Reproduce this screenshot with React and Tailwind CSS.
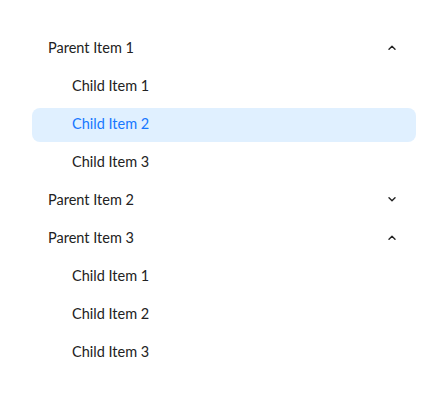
import React from "react";

function Chevron({ up }) {
  return (
    <svg width="8" height="5" viewBox="0 0 8 5" className="shrink-0">
      <path
        d={up ? "M1 4.2 L4 1.2 L7 4.2" : "M1 0.8 L4 3.8 L7 0.8"}
        fill="none"
        stroke="#222"
        strokeWidth="1.4"
        strokeLinecap="round"
        strokeLinejoin="round"
      />
    </svg>
  );
}

function Parent({ label, open }) {
  return (
    <div className="h-[34px] flex items-center justify-between pl-4 pr-[20px] pb-[3px] rounded-lg">
      <span>{label}</span>
      <Chevron up={open} />
    </div>
  );
}

function Child({ label, active }) {
  return (
    <div
      className={
        active
          ? "h-[34px] flex items-center pl-10 pb-[3px] rounded-lg bg-[#e0f0ff] text-[#1677ff]"
          : "h-[34px] flex items-center pl-10 pb-[3px] rounded-lg"
      }
    >
      {label}
    </div>
  );
}

export default function App() {
  return (
    <div
      className="w-[448px] h-[402px] bg-white p-8 text-[14.5px] text-[#222] flex flex-col gap-1"
      style={{ fontFamily: "Lato, 'Noto Sans', sans-serif" }}
    >
      <Parent label="Parent Item 1" open />
      <Child label="Child Item 1" />
      <Child label="Child Item 2" active />
      <Child label="Child Item 3" />
      <Parent label="Parent Item 2" />
      <Parent label="Parent Item 3" open />
      <Child label="Child Item 1" />
      <Child label="Child Item 2" />
      <Child label="Child Item 3" />
    </div>
  );
}
